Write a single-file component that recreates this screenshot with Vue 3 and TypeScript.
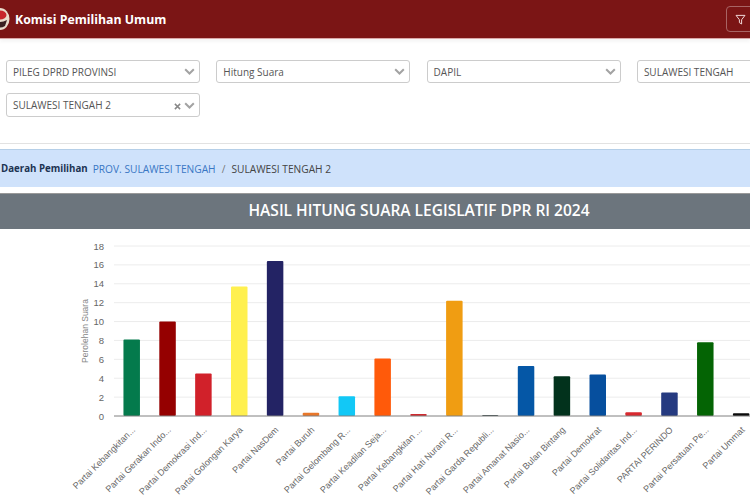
<script setup lang="ts">
interface Party { name: string; value: number; color: string }

const parties: Party[] = [
  { name: 'Partai Kebangkitan...', value: 8.1, color: '#047a4c' },
  { name: 'Partai Gerakan Indo...', value: 10, color: '#950000' },
  { name: 'Partai Demokrasi Ind...', value: 4.5, color: '#d1212a' },
  { name: 'Partai Golongan Karya', value: 13.7, color: '#fff04f' },
  { name: 'Partai NasDem', value: 16.4, color: '#232364' },
  { name: 'Partai Buruh', value: 0.35, color: '#e8772a' },
  { name: 'Partai Gelombang R...', value: 2.1, color: '#12c8f6' },
  { name: 'Partai Keadilan Seja...', value: 6.1, color: '#ff5a0a' },
  { name: 'Partai Kebangkitan ...', value: 0.2, color: '#cf2a2f' },
  { name: 'Partai Hati Nurani R...', value: 12.2, color: '#f09d12' },
  { name: 'Partai Garda Republi...', value: 0.1, color: '#3a4a4a' },
  { name: 'Partai Amanat Nasio...', value: 5.3, color: '#0557a6' },
  { name: 'Partai Bulan Bintang', value: 4.2, color: '#02321c' },
  { name: 'Partai Demokrat', value: 4.4, color: '#064f9e' },
  { name: 'Partai Solidaritas Ind...', value: 0.4, color: '#d8292f' },
  { name: 'PARTAI PERINDO', value: 2.5, color: '#253a80' },
  { name: 'Partai Persatuan Pe...', value: 7.8, color: '#046404' },
  { name: 'Partai Ummat', value: 0.3, color: '#0a0a0a' },
]

const baseY = 187
const unit = 170 / 18
const ticks = [0, 2, 4, 6, 8, 10, 12, 14, 16, 18]
const cx = (i: number) => 131.7 + i * 35.85
const tickY = (t: number) => baseY - t * unit
</script>

<template>
  <div class="viewport">
    <header class="topbar">
      <div class="brand">
        <svg class="logo" viewBox="0 0 20 24" width="20" height="24" aria-hidden="true">
          <ellipse cx="10" cy="12" rx="9.5" ry="11" fill="#e9dccb" />
          <ellipse cx="10" cy="8" rx="6.5" ry="4.5" fill="#c8252b" />
          <path d="M3 13 Q10 17 17 13 L15 19 Q10 22 5 19 Z" fill="#3a2020" />
        </svg>
        <span class="brand-name">Komisi Pemilihan Umum</span>
      </div>
      <button class="filter-btn" type="button" aria-label="Filter">
        <svg viewBox="0 0 16 16" width="11" height="11" fill="none" stroke="#f4dede" stroke-width="1.4" stroke-linejoin="round">
          <path d="M1.5 2h13L9.6 8.4V14.5L6.4 12.6V8.4Z" />
        </svg>
      </button>
    </header>

    <section class="filters">
      <div class="select">
        <span class="value">PILEG DPRD PROVINSI</span>
        <svg class="chev" viewBox="0 0 14 8" width="11" height="7"><path d="M1.5 1.2 7 6.5l5.5-5.3" /></svg>
      </div>
      <div class="select">
        <span class="value">Hitung Suara</span>
        <svg class="chev" viewBox="0 0 14 8" width="11" height="7"><path d="M1.5 1.2 7 6.5l5.5-5.3" /></svg>
      </div>
      <div class="select">
        <span class="value">DAPIL</span>
        <svg class="chev" viewBox="0 0 14 8" width="11" height="7"><path d="M1.5 1.2 7 6.5l5.5-5.3" /></svg>
      </div>
      <div class="select">
        <span class="value">SULAWESI TENGAH</span>
        <svg class="chev" viewBox="0 0 14 8" width="11" height="7"><path d="M1.5 1.2 7 6.5l5.5-5.3" /></svg>
      </div>
      <div class="select tall">
        <span class="value">SULAWESI TENGAH 2</span>
        <svg class="clear" viewBox="0 0 8 8" width="7" height="7"><path d="M1 1l6 6M7 1 1 7" /></svg>
        <svg class="chev" viewBox="0 0 14 8" width="11" height="7"><path d="M1.5 1.2 7 6.5l5.5-5.3" /></svg>
      </div>
    </section>

    <nav class="crumb">
      <strong>Daerah Pemilihan</strong>
      <a class="link">PROV. SULAWESI TENGAH</a>
      <span class="sep">/</span>
      <span>SULAWESI TENGAH 2</span>
    </nav>

    <h1 class="title">HASIL HITUNG SUARA LEGISLATIF DPR RI 2024</h1>

    <svg class="chart" viewBox="0 0 750 271" width="750" height="271">
      <g v-for="t in ticks" :key="t">
        <line v-if="t > 0" x1="114" x2="750" :y1="tickY(t)" :y2="tickY(t)" class="grid" />
        <text x="104" :y="tickY(t) + 3.5" text-anchor="end" class="tick">{{ t }}</text>
      </g>
      <text transform="translate(88 102) rotate(-90)" text-anchor="middle" class="axis-title">Perolehan Suara</text>
      <rect
        v-for="(p, i) in parties"
        :key="p.name"
        :x="cx(i) - 8.25"
        :y="baseY - p.value * unit"
        width="16.5"
        :height="p.value * unit"
        rx="1"
        :fill="p.color"
      />
      <line x1="114" x2="750" :y1="baseY" :y2="baseY" class="axis" />
      <text
        v-for="(p, i) in parties"
        :key="'l' + p.name"
        :transform="`translate(${cx(i) + 4} ${baseY + 14.5}) rotate(-45)`"
        text-anchor="end"
        class="label"
      >{{ p.name }}</text>
    </svg>
  </div>
</template>

<style scoped>
.viewport {
  width: 750px;
  height: 500px;
  overflow: hidden;
  background: #fff;
  font-family: "Open Sans", "Noto Sans", sans-serif;
  color: #444;
}
.topbar {
  height: 38px;
  background: #7b1515;
  border-bottom: 1px solid #d9a9a9;
  box-shadow: 0 3px 3px rgba(0, 0, 0, 0.04);
  display: flex;
  align-items: center;
  justify-content: space-between;
}
.brand {
  display: flex;
  align-items: center;
  gap: 5px;
  margin-left: -10px;
}
.logo { display: block; }
.brand-name {
  color: #fff;
  font-size: 12.3px;
  font-weight: 700;
}
.filter-btn {
  width: 34px;
  height: 26px;
  margin-right: -10px;
  padding: 0 5px 0 0;
  background: transparent;
  border: 1px solid #a86464;
  border-radius: 4px;
  display: flex;
  align-items: center;
  justify-content: center;
}
.filters {
  width: 838px;
  box-sizing: border-box;
  height: 105px;
  padding: 21px 0 0 6px;
  border-bottom: 1px solid #e2e2e2;
  display: grid;
  grid-template-columns: repeat(4, 194px);
  grid-auto-rows: min-content;
  column-gap: 16.3px;
  row-gap: 10px;
}
.select {
  box-sizing: border-box;
  height: 23px;
  padding: 0 4px 0 6px;
  border: 1px solid #ccc;
  border-radius: 3px;
  display: flex;
  align-items: center;
  font-size: 10px;
  color: #555;
  background: #fff;
}
.select.tall { height: 24px; }
.value {
  flex: 1;
  white-space: nowrap;
}
.chev {
  fill: none;
  stroke: #a3a3a3;
  stroke-width: 2.6;
  flex: none;
}
.clear {
  fill: none;
  stroke: #888;
  stroke-width: 1.7;
  margin: 3px 3px 0 0;
  flex: none;
}
.crumb {
  height: 38px;
  margin-top: 5px;
  box-sizing: border-box;
  padding-left: 1px;
  background: #cfe2fb;
  border-top: 1px solid #b5cfe8;
  display: flex;
  align-items: center;
  font-size: 10.2px;
  color: #444;
  white-space: nowrap;
}
.crumb strong {
  color: #1c3352;
  font-size: 9.7px;
  font-weight: 700;
  margin-right: 5px;
}
.link { color: #3a77c4; }
.sep {
  margin: 0 6px;
  color: #777;
}
.title {
  width: 838px;
  height: 36px;
  line-height: 33px;
  margin: 6px 0 0;
  background: #6c757d;
  border-top: 1px solid #999;
  box-sizing: border-box;
  color: #fff;
  text-align: center;
  font-size: 15.5px;
  font-weight: 600;
  white-space: nowrap;
}
.chart { display: block; }
.grid {
  stroke: #ececec;
  stroke-width: 1;
}
.axis {
  stroke: #808080;
  stroke-width: 1;
}
.tick, .label, .axis-title {
  font-family: "Liberation Sans", Arial, sans-serif;
  fill: #666;
}
.tick { font-size: 9.5px; }
.axis-title {
  font-size: 8.5px;
  fill: #888;
}
.label { font-size: 9px; }
</style>

<style>
html, body {
  margin: 0;
  overflow: hidden;
}
</style>
